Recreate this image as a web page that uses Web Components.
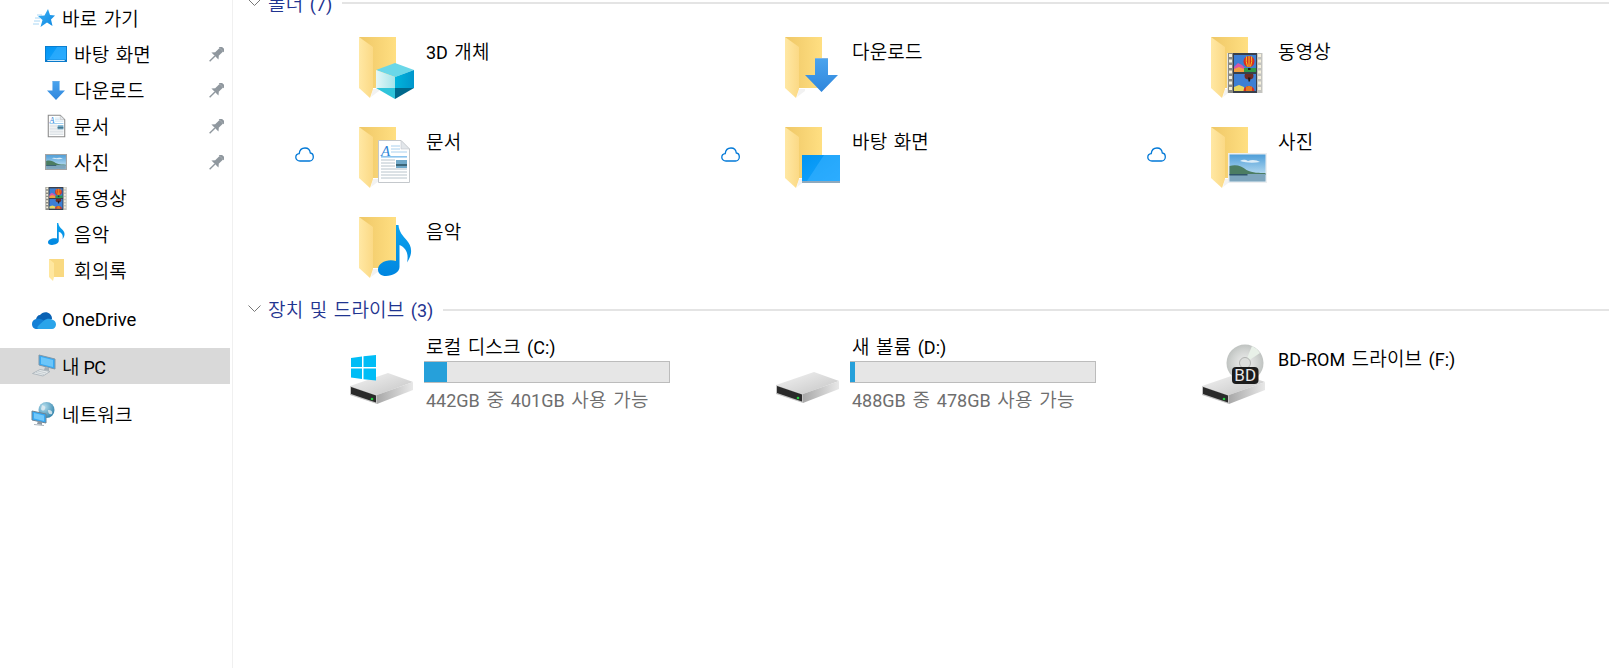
<!DOCTYPE html>
<html lang="ko">
<head>
<meta charset="utf-8">
<title>내 PC</title>
<style>
html, body { margin: 0; height: 100%; overflow: hidden; background: #fff; }
body { display: flex; font-family: Roboto, "Noto Sans CJK KR", sans-serif; font-size: 19px; font-weight: 350; letter-spacing: .2px; word-spacing: 1.5px; color: #000; }
/* latin runs: roboto has no 350 so it would drop to light */
.en { font-size: 18px; font-weight: 400; letter-spacing: 0; }
</style>
</head>
<body>
<nav-pane>
  <nav-item level="1" icon="star">바로 가기</nav-item>
  <nav-item level="2" icon="navmonitor" pinned>바탕 화면</nav-item>
  <nav-item level="2" icon="arrow" pinned>다운로드</nav-item>
  <nav-item level="2" icon="navdoc" pinned>문서</nav-item>
  <nav-item level="2" icon="navpic" pinned>사진</nav-item>
  <nav-item level="2" icon="film">동영상</nav-item>
  <nav-item level="2" icon="note">음악</nav-item>
  <nav-item level="2" icon="smallfolder">회의록</nav-item>
  <nav-item level="1" icon="onedrive" style="margin-top:14px"><span class="en" style="font-size:18.5px">OneDrive</span></nav-item>
  <nav-item level="1" icon="pc" selected style="margin-top:10px;word-spacing:-1px">내 <span class="en" style="letter-spacing:-.6px">PC</span></nav-item>
  <nav-item level="1" icon="network" style="margin-top:12px">네트워크</nav-item>
</nav-pane>
<main-view>
  <file-section style="margin-top:-9px">
    <span slot="label">폴더 <span class="en">(7)</span></span>
    <folder-tile overlay="cube"><span class="en">3D</span> 개체</folder-tile>
    <folder-tile overlay="arrow">다운로드</folder-tile>
    <folder-tile overlay="film">동영상</folder-tile>
    <folder-tile overlay="doc" cloud>문서</folder-tile>
    <folder-tile overlay="monitor" cloud>바탕 화면</folder-tile>
    <folder-tile overlay="pic" cloud>사진</folder-tile>
    <folder-tile overlay="note">음악</folder-tile>
  </file-section>
  <file-section style="--line-shift:2px">
    <span slot="label">장치 및 드라이브 <span class="en">(3)</span></span>
    <drive-tile icon="hddwin" used="23">로컬 디스크 <span class="en">(C:)</span>
      <span slot="sub"><span class="en">442GB</span> 중 <span class="en">401GB</span> 사용 가능</span></drive-tile>
    <drive-tile icon="hdd" used="5">새 볼륨 <span class="en">(D:)</span>
      <span slot="sub"><span class="en">488GB</span> 중 <span class="en">478GB</span> 사용 가능</span></drive-tile>
    <drive-tile icon="bd"><span class="en">BD-ROM</span> 드라이브 <span class="en">(F:)</span></drive-tile>
  </file-section>
</main-view>

<script>
// artwork, each drawn at its own size so it can go in a folder or in the nav pane
const docArt = (stroke, sw) => `
    <polygon points="0.5,0.5 23,0.5 31.5,9 31.5,42.500 0.5,42.500" fill="#fff" stroke="${stroke}" stroke-width="${sw}"/>
    <polygon points="23,0.5 31.5,9 23,9" fill="#e2e6ea" stroke="${stroke}" stroke-width=".6"/>
    <text x="3" y="16" font-family="Liberation Serif, serif" font-style="italic" font-size="15" fill="#2f86d8">A</text>
    <path d="M13 6h9M13 9h9M13 12h16" stroke="#a9d0ee" stroke-width="1"/>
    <rect x="3" y="16" width="26" height="1.600" fill="#8cc4ee"/>
    <path d="M3 20h14M3 23h14M3 26h14M3 29h26M3 32h26M3 35h26M3 38h26" stroke="#b8c4cc" stroke-width="1"/>
    <rect x="18" y="20" width="11" height="8" fill="#6fa8c8"/>
    <rect x="18" y="24" width="11" height="2" fill="#3c6678"/>`;

const picArt = (edge, frame) => `
    <defs><linearGradient id="sk" x1="0" y1="0" x2="0" y2="1"><stop offset="0" stop-color="#4e9ed8"/><stop offset="1" stop-color="#d8eef8"/></linearGradient></defs>
    <rect width="39" height="30" fill="${edge}"/>
    <rect x="${frame}" y="${frame}" width="${39 - frame * 2}" height="${30 - frame * 2}" fill="url(#sk)"/>
    <path d="M12 8c3-2 6-1 8 0 4-2 9-1 12 1-6 1-14 1-20-1z" fill="#fff" opacity=".75"/>
    <path d="M${frame} 13c7-2 12 0 17 4 6 3 13 3 ${22 - frame * 2} 3v2H${frame}z" fill="#4c7d62"/>
    <rect x="${frame}" y="21" width="${39 - frame * 2}" height="${9 - frame}" fill="#7ea6bd"/>
    <rect x="${frame}" y="21" width="18" height="1.500" fill="#2f5568"/>`;

const monitorArt = `
    <defs><linearGradient id="mo" x1="0" y1="0" x2="1" y2="1"><stop offset="0" stop-color="#0094f2"/><stop offset="1" stop-color="#1aa6ff"/></linearGradient></defs>
    <rect width="38" height="26" fill="url(#mo)"/>
    <polygon points="22,0 38,0 38,26 5,26" fill="#3cb2ff" opacity=".55"/>`;

const art = {
  cube: { w: 38, h: 36, svg: `
    <defs><linearGradient id="cl" x1="0" x2="1"><stop offset="0" stop-color="#e4f7f8"/><stop offset="1" stop-color="#a5e4ea"/></linearGradient>
    <linearGradient id="cr" x1="0" x2="1"><stop offset="0" stop-color="#00b4dc"/><stop offset="1" stop-color="#0096cc"/></linearGradient></defs>
    <polygon points="19,0 38,7 19,14 0,7" fill="#6ad7e8"/>
    <polygon points="0,7 19,14 19,25 0,25" fill="url(#cl)"/>
    <polygon points="19,14 38,7 38,25 19,25" fill="url(#cr)"/>
    <polygon points="0,25 19,25 19,36" fill="#2fc4da"/>
    <polygon points="38,25 19,25 19,36" fill="#00688c"/>` },
  arrow: { w: 33, h: 34, svg: `
    <defs><linearGradient id="ar" x1="0" y1="0" x2="0" y2="1"><stop offset="0" stop-color="#4ba4ee"/><stop offset="1" stop-color="#2f86dc"/></linearGradient></defs>
    <polygon points="10,0 23,0 23,17 33,17 16.500,34 0,17 10,17" fill="url(#ar)"/>
    <polygon points="10,0 23,0 23,1 10,1" fill="#7fb4e4"/>` },
  doc: { w: 32, h: 43, svg: docArt("#c4c8cc", 1) },
  navdoc: { w: 32, h: 43, svg: docArt("#8a8a8a", 2) },
  monitor: { w: 38, h: 28, svg: monitorArt + `<rect y="26" width="38" height="2" fill="#8fa9bd"/>` },
  navmonitor: { w: 38, h: 28, svg: monitorArt + `<rect y="24" width="38" height="4" fill="#0a74c4"/><rect x="4" y="24.500" width="30" height="1.600" fill="#e4f4ff"/><rect x=".8" y=".8" width="36.400" height="26.400" fill="none" stroke="#0a7ccc" stroke-width="1.600"/>` },
  film: { w: 36, h: 40, svg: `
    <defs><clipPath id="p1"><rect x="7" y="2" width="22" height="17"/></clipPath><clipPath id="p2"><rect x="7" y="21" width="22" height="17"/></clipPath></defs>
    <rect width="36" height="40" fill="#e4e4e0"/>
    <rect x="1" width="5" height="40" fill="#8a8a84"/><rect x="30" width="5" height="40" fill="#c4c4c0"/>
    <path d="M3.500 1v38M32.500 1v38" stroke="#f4efdc" stroke-width="3" stroke-dasharray="3 2.500"/>
    <rect x="6" width="24" height="40" fill="#39404c"/>
    <g clip-path="url(#p1)">
      <rect x="7" y="2" width="22" height="17" fill="#3d7fd4"/>
      <path d="M7 14l4-4 4 2 3 3v4H7z" fill="#d856a8"/><path d="M7 16l5-2 5 2v3H7z" fill="#f0a040"/>
      <rect x="17" y="15" width="12" height="4" fill="#2e9a4a"/>
      <ellipse cx="22" cy="8.500" rx="5.500" ry="5.500" fill="#d82e22"/>
      <path d="M19.500 3.500q-1 5 1 10M24.500 3.500q1 5-1 10M22 3v11" stroke="#f0c820" stroke-width="1" fill="none"/>
      <rect x="21" y="15" width="2.500" height="2" fill="#201c18"/>
    </g>
    <g clip-path="url(#p2)">
      <rect x="7" y="21" width="22" height="17" fill="#3d7fd4"/>
      <path d="M7 34l5-2 5 2v4H7z" fill="#e8d860"/>
      <ellipse cx="22" cy="23" rx="4.500" ry="3.500" fill="#6e2c26"/><path d="M21 24.500l.5 4h1.500l.5-4" fill="#201c18"/>
      <ellipse cx="22" cy="38" rx="5.500" ry="5" fill="#d82e22"/><path d="M20 33.500v5M24 33.500v5M22 33v5" stroke="#f0c820" stroke-width="1"/>
    </g>` },
  pic: { w: 39, h: 30, svg: picArt("#eceef0", 1.500) },
  navpic: { w: 39, h: 30, svg: picArt("#a4a4a4", 2) },
  note: { w: 34, h: 51, svg: `
    <defs><linearGradient id="nt" x1="0" y1="0" x2="0" y2="1"><stop offset="0" stop-color="#0da2ee"/><stop offset="1" stop-color="#0086e0"/></linearGradient></defs>
    <path d="M18 0h2.500C21 7 25 11 28.500 15 33.500 20.500 35.500 28 29 37.500 31 29 28 22.500 21.500 20V42C21.500 47.500 14.500 51 8 51 3 51 0 48.500 0 44.500 0 38 9 33.500 18 36Z" fill="url(#nt)"/>` },
  smallfolder: { w: 15, h: 22, svg: `
    <polygon points="0,0 15,0 15,18 4,18" fill="#f9d981"/>
    <polygon points="0,0 5,4 5,18 4,22 0,18" fill="#ffe79f"/>` },
  star: { w: 22, h: 19, svg: `
    <defs><linearGradient id="st" x1="0" y1="0" x2="1" y2="1"><stop offset="0" stop-color="#3fb2f5"/><stop offset="1" stop-color="#0c86e0"/></linearGradient></defs>
    <path d="M1 12h6M2 9h5M4 6h5M0 15h6" stroke="#a8d6f4" stroke-width="1"/>
    <polygon points="15,0 17,6 22,6.500 18,10.500 19.500,17 14,13.500 7.500,18 9.500,11 5,7 11.500,6.500" fill="url(#st)"/>` },
  onedrive: { w: 24, h: 17, svg: `
    <path d="M8 3C10 0 15 -1 18 2 19.500 3.500 20 5 20 7L14 10 4 8C4 5 6 3 8 3Z" fill="#0a62b4"/>
    <path d="M4 7C1.500 7.500 0 9.500 0 12 0 15 2 17 5 17H14L12 8.500C9 6.500 6 6.500 4 7Z" fill="#1380d6"/>
    <path d="M12 8.500C14 6.500 18 6 20 7.500 22.500 8 24 10 24 12.500 24 15 22 17 20 17H7C5 17 5 15 6 14L12 8.500Z" fill="#2aa4ea"/>` },
  pc: { w: 24, h: 22, svg: `
    <polygon points="7,0 23,4 23,14 7,10" fill="#35a8f4" stroke="#7f97a8" stroke-width="1"/>
    <polygon points="9,2 21,5 21,12 9,9" fill="#6cc6fa"/>
    <polygon points="13,12 17,13 17,16 12,15" fill="#a4aeb6"/>
    <path d="M0.500 18.500L8 14.500 18 16.500 11 21Z" fill="#e6eaec" stroke="#a4aeb6" stroke-width=".8"/>
    <path d="M4 17.500l8 2M6 16l8 2" stroke="#b8c0c6" stroke-width=".7"/>` },
  network: { w: 24, h: 24, svg: `
    <defs><radialGradient id="gl" cx=".35" cy=".3" r=".8"><stop offset="0" stop-color="#b6dfee"/><stop offset="1" stop-color="#2a7ea8"/></radialGradient></defs>
    <circle cx="14.500" cy="8" r="8" fill="url(#gl)"/>
    <path d="M10 3c3 1 4 2 3 4s-3 2-4 0M16 8c3 0 5 1 4 4-2 1-4 0-4-4" fill="#e4eef2" opacity=".8"/>
    <polygon points="0,9 14,12 14,21 0,18" fill="#35a8f4" stroke="#6e8494" stroke-width="1"/>
    <polygon points="2,11 12,13.500 12,19 2,16.500" fill="#72c8fa"/>
    <polygon points="6,19 10,20 10,23 5,22" fill="#8c98a2"/>
    <path d="M2 22.500l10 1" stroke="#aab4bc" stroke-width="1.200"/>` },
  hdd: { w: 64, h: 32, svg: hddBody() },
  hddwin: { w: 64, h: 50, svg: `
    <g transform="translate(0,18)">${hddBody()}</g>
    <polygon points="1,3 12,1.500 12,12 1,12" fill="#00bdf6"/><polygon points="13.500,1.300 26,0 26,12 13.500,12" fill="#00bdf6"/>
    <polygon points="1,13.500 12,13.500 12,24 1,22.500" fill="#00bdf6"/><polygon points="13.500,13.500 26,13.500 26,25.500 13.500,24.200" fill="#00bdf6"/>` },
  bd: { w: 64, h: 61, svg: `
    <g transform="translate(0,29)">${hddBody()}</g>
    <defs><radialGradient id="dc" cx=".5" cy=".5" r=".6"><stop offset="0" stop-color="#f0f0f0"/><stop offset=".6" stop-color="#cfd2d0"/><stop offset="1" stop-color="#b4b8b6"/></radialGradient></defs>
    <circle cx="43" cy="19" r="18.500" fill="url(#dc)"/>
    <path d="M43 19L58 9A18 18 0 0 0 50 2Z" fill="#e8f0e8"/>
    <circle cx="43" cy="19" r="5.500" fill="#dcdedc" stroke="#b0b2b0"/>
    <rect x="30" y="23" width="26.500" height="17" rx="4" fill="#1c1c1c"/>
    <text x="43.200" y="37" text-anchor="middle" font-family="Roboto, sans-serif" font-size="17" font-weight="400" letter-spacing="0" fill="#e8e8e8">BD</text>` },
};

function hddBody() {
  return `
    <defs><linearGradient id="hf" x1="0" x2="1"><stop offset="0" stop-color="#a8a8a8"/><stop offset="1" stop-color="#e8e8e8"/></linearGradient>
    <linearGradient id="ht" x1="0" y1="0" x2="1" y2="1"><stop offset="0" stop-color="#f4f4f4"/><stop offset="1" stop-color="#c4c4c4"/></linearGradient></defs>
    <polygon points="0,13 38,0 63,9 27,22" fill="url(#ht)"/>
    <polygon points="27,22 63,9 63,17 27,31" fill="url(#hf)"/>
    <polygon points="0,13 27,22 27,31 0,22" fill="#c4c4c4"/>
    <polygon points="1,14 26,22.500 26,29.500 1,21" fill="#2a2a2a"/>
    <circle cx="22" cy="26" r="1.300" fill="#25d040"/>`;
}

function folderSvg(overlay) {
  const boxes = {
    cube: [17, 26], arrow: [20, 21], film: [16, 16], doc: [19, 13],
    monitor: [17, 28], pic: [17, 26], note: [19, 8],
  };
  const [x, y] = boxes[overlay];
  return `<svg width="60" height="64" viewBox="0 0 60 64" aria-hidden="true">
    <defs>
      <linearGradient id="fb" x1="0" x2="1"><stop offset="0" stop-color="#efc766"/><stop offset="1" stop-color="#ffdf82"/></linearGradient>
      <linearGradient id="ff" x1="0" x2="1"><stop offset="0" stop-color="#ffe8a4"/><stop offset="1" stop-color="#fbd985"/></linearGradient>
    </defs>
    <polygon points="14,52 20,52 20,54 12,60" fill="#f2f2f2"/>
    <polygon points="0,0 37,0 37,51 12,51" fill="url(#fb)"/>
    <polygon points="0,0 14,10 14,52 11,61 0,51" fill="url(#ff)"/>
    <g transform="translate(${x},${y})">${art[overlay].svg}</g>
  </svg>`;
}

class AppIcon extends HTMLElement {
  connectedCallback() {
    const a = art[this.getAttribute("name")];
    const w = this.getAttribute("w") || a.w;
    const h = this.getAttribute("h") || a.h;
    this.attachShadow({ mode: "open" }).innerHTML = `
      <style>:host { display: block; line-height: 0; } svg { display: block; overflow: visible; }</style>
      <svg width="${w}" height="${h}" viewBox="0 0 ${a.w} ${a.h}" preserveAspectRatio="none" aria-hidden="true">${a.svg}</svg>`;
  }
}
customElements.define("app-icon", AppIcon);

class NavPane extends HTMLElement {
  constructor() {
    super();
    this.attachShadow({ mode: "open" }).innerHTML = `
      <style>
        :host { display: block; box-sizing: border-box; flex: none; width: 233px; height: 100vh; border-right: 1px solid #f0f0f0; padding-right: 2px; }
      </style>
      <slot></slot>`;
  }
}
customElements.define("nav-pane", NavPane);

// size of each icon in the nav pane
const navSizes = {
  star: [22, 19], navmonitor: [22, 16], arrow: [18, 19], navdoc: [17, 22], navpic: [22, 16], film: [22, 23],
  note: [17, 22], smallfolder: [15, 22], onedrive: [24, 17], pc: [24, 22], network: [24, 24],
};

class NavItem extends HTMLElement {
  connectedCallback() {
    const name = this.getAttribute("icon");
    const [w, h] = navSizes[name];
    const pad = this.getAttribute("level") === "2" ? 44 : 32;
    this.attachShadow({ mode: "open" }).innerHTML = `
      <style>
        :host { display: flex; align-items: center; height: 36px; padding-left: ${pad}px; padding-right: 6px; gap: 6px; white-space: nowrap; }
        :host([selected]) { background: #d9d9d9; }
        .ic { width: 24px; display: flex; justify-content: center; }
        .txt { flex: 1; padding-bottom: 2px; }
        svg { display: block; margin-top: 2px; }
      </style>
      <span class="ic"><app-icon name="${name}" w="${w}" h="${h}"></app-icon></span>
      <span class="txt"><slot></slot></span>
      ${this.hasAttribute("pinned") ? `<svg width="16" height="16" viewBox="0 0 16 16" aria-hidden="true"><g transform="rotate(45 8 8)" fill="#8f979e"><rect x="4.500" y="-2" width="7" height="2.500"/><rect x="5.500" y="0.500" width="5" height="6.500"/><polygon points="3,9.500 5.500,6.500 10.500,6.500 13,9.500"/><rect x="7.300" y="9.500" width="1.400" height="7.500"/></g></svg>` : ""}`;
  }
}
customElements.define("nav-item", NavItem);

class MainView extends HTMLElement {
  constructor() {
    super();
    this.attachShadow({ mode: "open" }).innerHTML = `
      <style>:host { display: block; flex: 1; min-width: 0; }</style>
      <slot></slot>`;
  }
}
customElements.define("main-view", MainView);

class FileSection extends HTMLElement {
  connectedCallback() {
    this.attachShadow({ mode: "open" }).innerHTML = `
      <style>
        :host { display: block; }
        .head { display: flex; align-items: center; height: 24px; padding-left: 15px; color: #1f3490; white-space: nowrap; }
        .chev { margin-right: 7px; }
        .label { padding-bottom: 2px; }
        .line { flex: 1; height: 2px; margin: var(--line-shift, 0) 0 0 10px; background: #e4e4e4; }
        .grid { display: grid; grid-template-columns: repeat(3, 426px); grid-auto-rows: 90px; padding: 12px 0 0 52px; }
      </style>
      <div class="head">
        <svg class="chev" width="13" height="8" viewBox="0 0 13 8" aria-hidden="true"><path d="M0.500 0.500L6.500 6.500 12.500 0.500" fill="none" stroke="#777" stroke-width="1"/></svg>
        <span class="label"><slot name="label"></slot></span><span class="line"></span>
      </div>
      <div class="grid"><slot></slot></div>`;
  }
}
customElements.define("file-section", FileSection);

class FolderTile extends HTMLElement {
  connectedCallback() {
    this.attachShadow({ mode: "open" }).innerHTML = `
      <style>
        :host { display: grid; grid-template-columns: 74px 67px 1fr; padding-top: 10px; line-height: 28px; }
        .cloud { padding: 20px 0 0 10px; line-height: 0; }
        .name { padding-top: 2px; }
        svg { display: block; }
      </style>
      <div class="cloud">${this.hasAttribute("cloud") ? `<svg width="19" height="15" viewBox="0 0 19 15" aria-hidden="true"><path d="M5 14C2.500 14 .8 12.300 .8 10.200 .8 8.200 2.300 6.800 4.200 6.600 4.600 3.300 7 1 10 1 13 1 15 3 15.300 6 17 6.200 18.300 7.800 18.300 10 18.300 12.300 16.500 14 14.500 14Z" fill="none" stroke="#0078d7" stroke-width="1.300"/></svg>` : ""}</div>
      <div>${folderSvg(this.getAttribute("overlay"))}</div>
      <div class="name"><slot></slot></div>`;
  }
}
customElements.define("folder-tile", FolderTile);

class DriveTile extends HTMLElement {
  connectedCallback() {
    const used = this.getAttribute("used");
    const icon = this.getAttribute("icon");
    const meter = used ? `
      <div class="bar"><div class="fill" style="width:${used}px"></div></div>
      <div class="sub"><slot name="sub"></slot></div>` : "";
    this.attachShadow({ mode: "open" }).innerHTML = `
      <style>
        :host { display: grid; grid-template-columns: 139px 246px; line-height: 28px; }
        .ic { padding: ${icon === "hdd" ? 39 : icon === "hddwin" ? 22 : 11}px 0 0 65px; }
        .title { padding-left: 2px; height: 28px; line-height: 30px; white-space: nowrap; }
        .title.solo { margin-top: 12px; }
        .bar { box-sizing: border-box; height: 22px; background: #e6e6e6; border: 1px solid #bcbcbc; border-left: 0; }
        .fill { height: 20px; background: #26a0da; }
        .sub { padding-left: 2px; margin-top: 4px; color: #6e6e6e; white-space: nowrap; word-spacing: 1.8px; }
      </style>
      <div class="ic"><app-icon name="${icon}"></app-icon></div>
      <div>
        <div class="title ${used ? "" : "solo"}"><slot></slot></div>
        ${meter}
      </div>`;
  }
}
customElements.define("drive-tile", DriveTile);
</script>
</body>
</html>
